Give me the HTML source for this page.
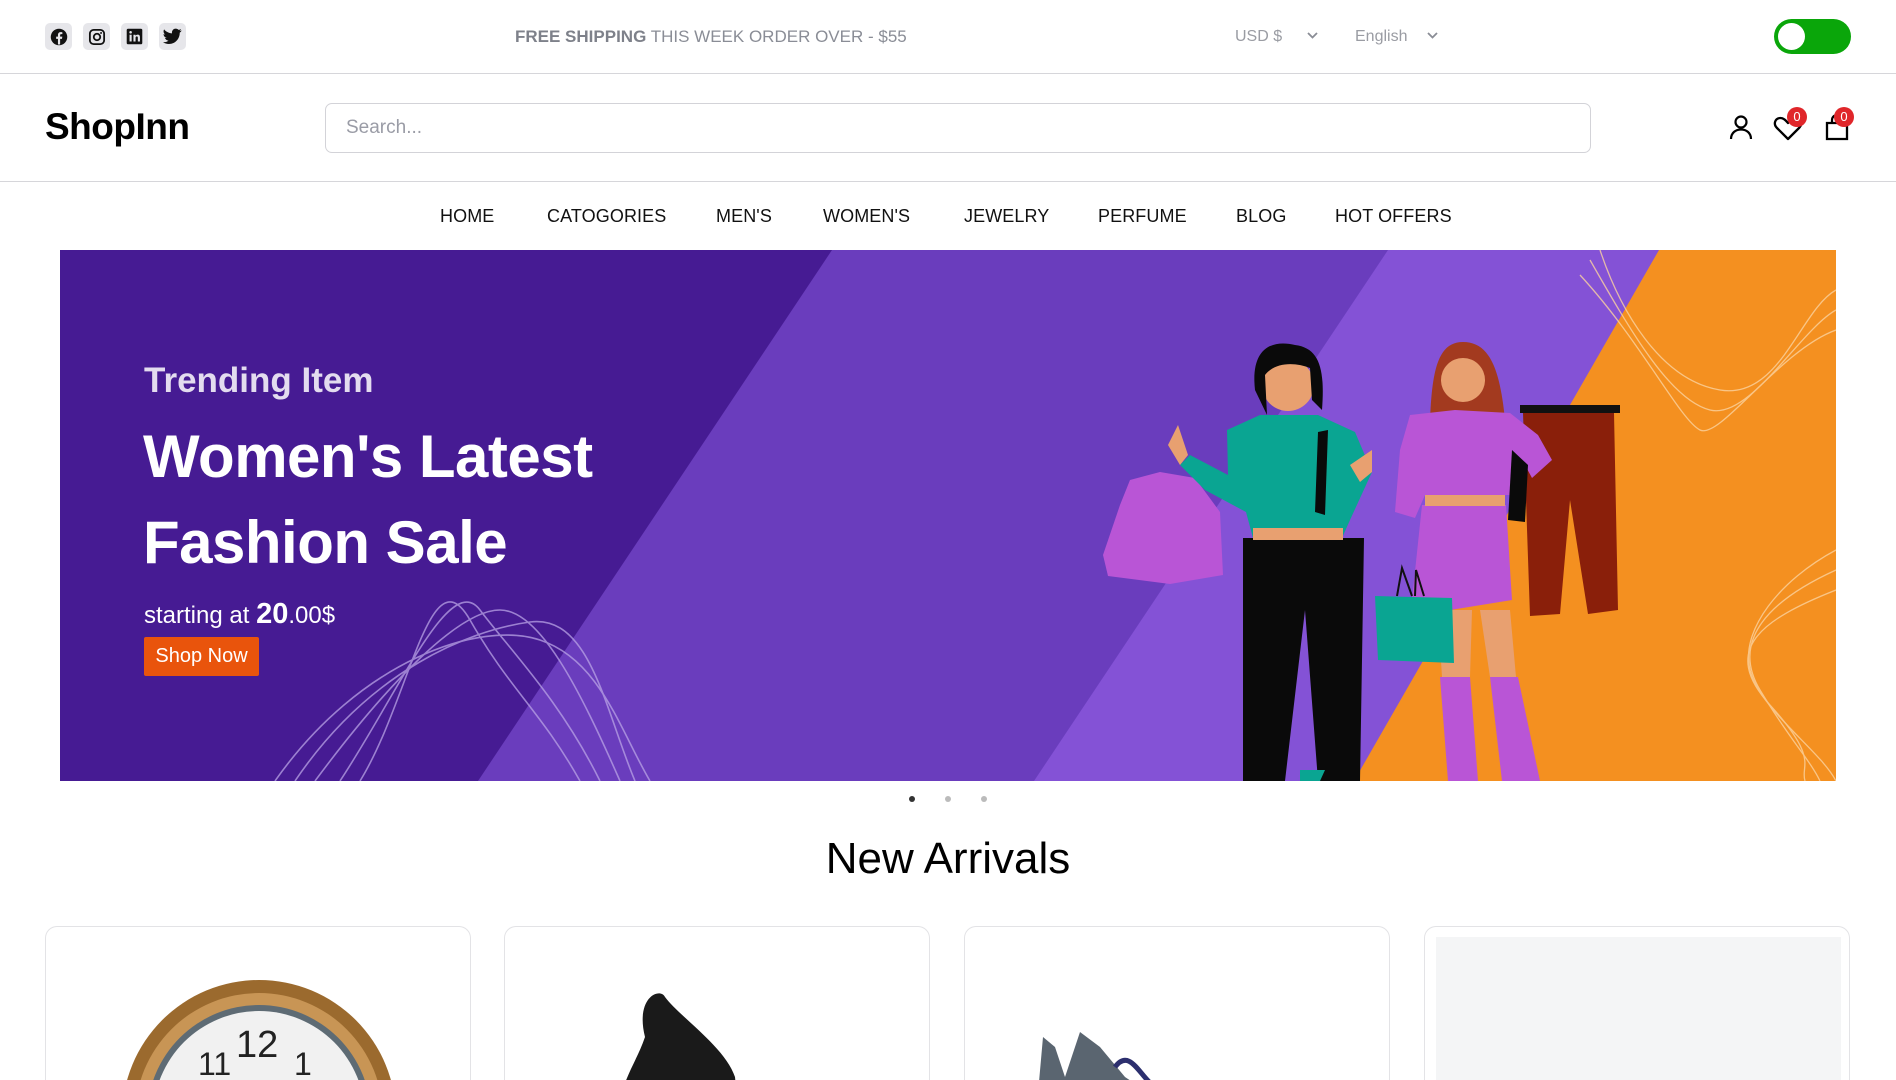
<!DOCTYPE html>
<html><head><meta charset="utf-8"><style>
*{margin:0;padding:0;box-sizing:border-box}
html,body{width:1896px;height:1080px;overflow:hidden}
body{background:#fff;font-family:"Liberation Sans",sans-serif;position:relative;color:#111}
.abs{position:absolute}
.soc{position:absolute;top:23px;width:27px;height:27px;background:#e6e6ea;border-radius:5px;display:flex;align-items:center;justify-content:center}
.nav{position:absolute;top:206px;font-size:18px;color:#111;letter-spacing:0.1px}
.badge{position:absolute;width:20px;height:20px;border-radius:50%;background:#e0262a;color:#fff;font-size:13px;text-align:center;line-height:20px}
.card{position:absolute;top:926px;width:426px;height:154px;border:1px solid #e3e3e6;border-bottom:none;border-radius:12px 12px 0 0;overflow:hidden;background:#fff}
</style></head><body>
<div class="soc" style="left:45px"><svg width="18" height="18" viewBox="0 0 24 24"><circle cx="12" cy="12" r="11" fill="#111"/><path d="M13.5 22v-7.5h2.5l.4-3h-2.9V9.7c0-.9.3-1.5 1.5-1.5h1.5V5.6c-.3 0-1.2-.1-2.2-.1-2.2 0-3.7 1.3-3.7 3.8v2.2H8.2v3h2.4V22z" fill="#e6e6ea"/></svg></div>
<div class="soc" style="left:83px"><svg width="18" height="18" viewBox="0 0 24 24"><rect x="2.5" y="2.5" width="19" height="19" rx="5" fill="none" stroke="#111" stroke-width="2.4"/><circle cx="12" cy="12" r="4.3" fill="none" stroke="#111" stroke-width="2.4"/><circle cx="17.4" cy="6.6" r="1.3" fill="#111"/></svg></div>
<div class="soc" style="left:121px"><svg width="17" height="17" viewBox="0 0 24 24"><rect x="1" y="1" width="22" height="22" rx="2" fill="#111"/><rect x="5" y="9.5" width="3" height="9.5" fill="#e6e6ea"/><circle cx="6.5" cy="6" r="1.8" fill="#e6e6ea"/><path d="M10.5 9.5h2.9v1.4c.5-.9 1.6-1.6 3.1-1.6 2.6 0 3.2 1.7 3.2 4V19h-3v-5c0-1.1-.2-2.1-1.5-2.1s-1.7 1-1.7 2.1v5h-3z" fill="#e6e6ea"/></svg></div>
<div class="soc" style="left:159px"><svg width="19" height="17" viewBox="0 0 24 20"><path d="M23.5 2.4c-.9.4-1.8.6-2.8.8 1-.6 1.8-1.5 2.1-2.7-.9.6-2 1-3.1 1.2C18.8.7 17.5.1 16.1.1c-2.7 0-4.8 2.2-4.8 4.8 0 .4 0 .8.1 1.1C7.4 5.8 3.8 3.9 1.4 1 1 1.7.7 2.6.7 3.5c0 1.7.9 3.2 2.200 4-.8 0-1.5-.2-2.2-.6v.1c0 2.3 1.7 4.3 3.9 4.7-.4.1-.8.2-1.3.2-.3 0-.6 0-.9-.1.6 1.9 2.4 3.3 4.5 3.4-1.7 1.3-3.7 2.1-6 2.1H0c2.1 1.4 4.7 2.2 7.4 2.2 8.9 0 13.700-7.4 13.7-13.7v-.6c.9-.7 1.7-1.5 2.4-2.5z" fill="#111"/></svg></div>
<div class="abs" style="left:515px;top:27px;font-size:17px;color:#8a8d96;white-space:nowrap"><b style="color:#7e818a">FREE SHIPPING</b> THIS WEEK ORDER OVER - $55</div>
<div class="abs" style="left:1235px;top:28px;font-size:16px;color:#9a9ca3">USD $</div>
<svg class="abs" style="left:1306px;top:31px" width="13" height="9" viewBox="0 0 13 9"><path d="M2 2l4.5 4.5L11 2" fill="none" stroke="#8a8d96" stroke-width="1.8"/></svg>
<div class="abs" style="left:1355px;top:28px;font-size:16px;color:#9a9ca3">English</div>
<svg class="abs" style="left:1426px;top:31px" width="13" height="9" viewBox="0 0 13 9"><path d="M2 2l4.5 4.5L11 2" fill="none" stroke="#8a8d96" stroke-width="1.8"/></svg>
<div class="abs" style="left:1774px;top:19px;width:77px;height:35px;border-radius:18px;background:#0aa60a"></div>
<div class="abs" style="left:1778px;top:23px;width:27px;height:27px;border-radius:50%;background:#fff"></div>
<div class="abs" style="left:0;top:73px;width:1896px;height:1px;background:#d6d6da"></div>
<div class="abs" style="left:45px;top:106px;font-size:37px;font-weight:bold;color:#000;letter-spacing:-0.5px">ShopInn</div>
<div class="abs" style="left:325px;top:103px;width:1266px;height:50px;border:1px solid #d3d3d8;border-radius:7px"></div>
<div class="abs" style="left:346px;top:117px;font-size:19px;color:#9a9ca6">Search...</div>
<svg class="abs" style="left:1728px;top:113px" width="26" height="28" viewBox="0 0 26 28"><circle cx="13" cy="9" r="5.5" fill="none" stroke="#000" stroke-width="2.2"/><path d="M3 26c0-6 4.5-9.5 10-9.5S23 20 23 26" fill="none" stroke="#000" stroke-width="2.2"/></svg>
<svg class="abs" style="left:1773px;top:114px" width="30" height="28" viewBox="0 0 30 28"><path d="M15 25L4 14C0 10 2 4 7.5 4c3 0 5 2 7.5 5 2.5-3 4.5-5 7.5-5C28 4 30 10 26 14z" fill="none" stroke="#000" stroke-width="2.3" stroke-linejoin="round"/></svg>
<svg class="abs" style="left:1824px;top:113px" width="26" height="28" viewBox="0 0 26 28"><path d="M3 10h20v16H3z" fill="none" stroke="#000" stroke-width="2.3"/><path d="M8 10V7a5 5 0 0110 0v3" fill="none" stroke="#000" stroke-width="2.2"/></svg>
<div class="badge" style="left:1787px;top:107px">0</div>
<div class="badge" style="left:1834px;top:107px">0</div>
<div class="abs" style="left:0;top:181px;width:1896px;height:1px;background:#d6d6da"></div>
<div class="nav" style="left:440px">HOME</div>
<div class="nav" style="left:547px">CATOGORIES</div>
<div class="nav" style="left:716px">MEN'S</div>
<div class="nav" style="left:823px">WOMEN'S</div>
<div class="nav" style="left:964px">JEWELRY</div>
<div class="nav" style="left:1098px">PERFUME</div>
<div class="nav" style="left:1236px">BLOG</div>
<div class="nav" style="left:1335px">HOT OFFERS</div>
<svg class="abs" style="left:60px;top:250px" width="1776" height="531" viewBox="0 0 1776 531">
<rect width="1776" height="531" fill="#461b93"/>
<polygon points="772,0 1776,0 1776,531 418,531" fill="#6a3dbd"/>
<polygon points="1328,0 1776,0 1776,531 974,531" fill="#8452d6"/>
<polygon points="1599,0 1776,0 1776,531 1294,531" fill="#f49020"/>
<g fill="none" stroke="#b9a3e6" stroke-width="1.6" opacity="0.75">
<path d="M215 531C300 410 420 370 480 390S560 480 590 531"/>
<path d="M235 531C310 420 410 380 470 372S545 460 575 531"/>
<path d="M255 531C330 430 400 360 440 360S520 440 560 531"/>
<path d="M280 531C340 440 390 320 420 360S500 450 540 531"/>
<path d="M300 531C350 450 370 300 410 370S480 460 520 531"/>
</g>
<g fill="none" stroke="#fbd3a0" stroke-width="1.3" opacity="0.8">
<path d="M1540 0C1560 60 1600 130 1660 140S1740 60 1776 40"/>
<path d="M1530 10C1570 80 1610 150 1650 160S1740 80 1776 60"/>
<path d="M1520 25C1580 90 1620 170 1640 180S1720 100 1776 80"/>
<path d="M1776 300C1720 330 1680 380 1690 420S1760 500 1776 531"/>
<path d="M1776 320C1710 350 1670 390 1700 440S1750 510 1760 531"/>
<path d="M1776 340C1700 370 1660 400 1710 455S1740 515 1745 531"/>
</g>
<path d="M1070 230L1100 222L1135 228L1160 262L1163 325L1110 334L1048 326L1043 305L1060 255Z" fill="#b955d6"/>
<path d="M1183 288L1304 288L1300 531L1258 531L1245 360L1225 531L1183 531Z" fill="#0a0a0a"/>
<path d="M1167 180L1200 165L1258 165L1295 182L1312 222L1290 270L1282 288L1193 288L1186 262L1145 240L1120 215L1130 205L1168 225Z" fill="#0aa592"/>
<path d="M1312 222L1300 232L1290 215L1312 200Z" fill="#e8a070"/>
<rect x="1193" y="278" width="90" height="12" fill="#e8a070"/>
<circle cx="1228" cy="135" r="26" fill="#e8a070"/>
<path d="M1195 140C1190 95 1215 90 1235 95C1260 98 1265 120 1262 160L1252 150L1250 118C1235 112 1215 112 1205 125L1207 165Z" fill="#0a0a0a"/>
<path d="M1268 180L1265 265L1255 262L1258 182Z" fill="#0a0a0a"/>
<path d="M1120 215L1108 195L1118 175L1128 205Z" fill="#e8a070"/>
<path d="M1240 531L1260 531L1265 520L1240 520Z" fill="#0aa592"/>
<path d="M1463 163L1554 163L1558 360L1528 364L1510 250L1500 364L1470 366Z" fill="#8a1f0a"/>
<rect x="1460" y="155" width="100" height="8" fill="#111"/>
<path d="M1380 427L1410 427L1418 531L1388 531Z" fill="#b955d6"/>
<path d="M1430 427L1458 427L1480 531L1442 531Z" fill="#b955d6"/>
<path d="M1378 360L1412 360L1410 427L1382 427Z" fill="#e8a070"/>
<path d="M1420 360L1450 360L1456 427L1430 427Z" fill="#e8a070"/>
<path d="M1362 255L1446 255L1452 350L1378 362L1352 350Z" fill="#b955d6"/>
<rect x="1365" y="240" width="80" height="16" fill="#e8a070"/>
<path d="M1403 92C1378 92 1372 120 1370 170L1445 170C1440 120 1430 92 1403 92Z" fill="#a33a1f"/>
<circle cx="1403" cy="130" r="22" fill="#e8a070"/>
<path d="M1350 165L1395 160L1450 163L1478 185L1492 210L1472 228L1465 215L1455 245L1365 245L1355 268L1335 262L1340 200Z" fill="#b955d6"/>
<path d="M1452 200L1448 270L1465 272L1468 215Z" fill="#0a0a0a"/>
<path d="M1315 346L1392 348L1394 413L1318 410Z" fill="#0aa592"/>
<path d="M1337 346L1342 318L1352 346M1355 346L1356 320L1364 346" fill="none" stroke="#111" stroke-width="2"/>
</svg>
<div class="abs" style="left:144px;top:361px;font-size:35px;font-weight:bold;color:#e3dcef">Trending Item</div>
<div class="abs" style="left:143px;top:422px;font-size:60px;font-weight:bold;color:#fff;letter-spacing:-0.5px">Women's Latest</div>
<div class="abs" style="left:143px;top:508px;font-size:60px;font-weight:bold;color:#fff;letter-spacing:-0.5px">Fashion Sale</div>
<div class="abs" style="left:144px;top:598px;font-size:24px;color:#fff">starting at <b style="font-size:29px">20</b>.00$</div>
<div class="abs" style="left:144px;top:637px;width:115px;height:39px;background:#e9540c;border-radius:2px;color:#fff;font-size:20px;line-height:39px;text-align:center">Shop Now</div>
<div class="abs" style="left:909px;top:796px;width:6px;height:6px;border-radius:50%;background:#333"></div>
<div class="abs" style="left:945px;top:796px;width:6px;height:6px;border-radius:50%;background:#bbb"></div>
<div class="abs" style="left:981px;top:796px;width:6px;height:6px;border-radius:50%;background:#bbb"></div>
<div class="abs" style="left:0;top:834px;width:1896px;text-align:center;font-size:44px;color:#000">New Arrivals</div>
<div class="card" style="left:45px">
<svg width="426" height="154"><circle cx="213" cy="190" r="137" fill="#9b6a2e"/><circle cx="213" cy="190" r="124" fill="#c89555"/><circle cx="213" cy="190" r="112" fill="#5e6b74"/><circle cx="213" cy="190" r="106" fill="#f1f1f1"/><text x="190" y="130" font-size="38" font-family="Liberation Sans" fill="#222">12</text><text x="152" y="148" font-size="32" font-family="Liberation Sans" fill="#222">11</text><text x="248" y="148" font-size="32" font-family="Liberation Sans" fill="#222">1</text></svg></div>
<div class="card" style="left:504px">
<svg width="426" height="154"><path d="M140 110C130 70 155 60 160 70C175 90 220 120 230 150L235 200L115 200C110 160 130 140 140 110Z" fill="#1a1a1a"/></svg></div>
<div class="card" style="left:964px">
<svg width="426" height="154"><path d="M70 200L78 110L90 120L100 150L115 105L135 120L160 150L190 170L210 200Z" fill="#5a6570"/><path d="M150 140C165 120 175 150 190 160S200 185 210 200" fill="none" stroke="#2c2f6e" stroke-width="5"/></svg></div>
<div class="card" style="left:1424px"><div style="position:absolute;left:11px;top:10px;width:405px;height:200px;background:#f4f5f6"></div></div>
</body></html>
